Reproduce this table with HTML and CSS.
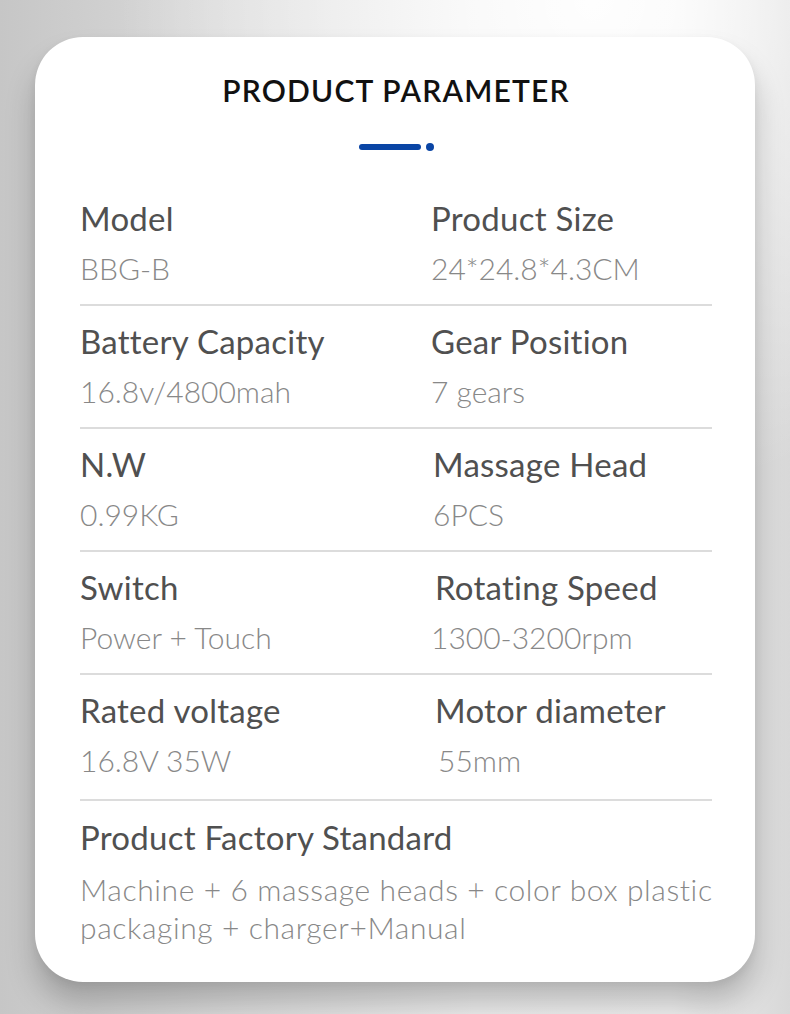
FILE: index.html
```html
<!DOCTYPE html>
<html lang="en">
<head>
<meta charset="utf-8">
<title>Product Parameter</title>
<link rel="stylesheet" href="styles.css">
</head>
<body>
<div class="page">
  <section class="card">
    <h1 class="title">PRODUCT PARAMETER</h1>
    <div class="accent"><span class="accent-bar"></span><span class="accent-dot"></span></div>
    <div class="specs">
      <div class="row">
        <div class="cell"><div class="label">Model</div><div class="value">BBG-B</div></div>
        <div class="cell"><div class="label">Product Size</div><div class="value">24*24.8*4.3CM</div></div>
      </div>
      <div class="row">
        <div class="cell"><div class="label">Battery Capacity</div><div class="value">16.8v/4800mah</div></div>
        <div class="cell"><div class="label">Gear Position</div><div class="value">7 gears</div></div>
      </div>
      <div class="row">
        <div class="cell"><div class="label">N.W</div><div class="value">0.99KG</div></div>
        <div class="cell shift-s"><div class="label">Massage Head</div><div class="value">6PCS</div></div>
      </div>
      <div class="row">
        <div class="cell"><div class="label">Switch</div><div class="value">Power + Touch</div></div>
        <div class="cell shift-m"><div class="label">Rotating Speed</div><div class="value value-back">1300-3200rpm</div></div>
      </div>
      <div class="row row-tall">
        <div class="cell"><div class="label">Rated voltage</div><div class="value">16.8V 35W</div></div>
        <div class="cell shift-m"><div class="label">Motor diameter</div><div class="value value-fwd">55mm</div></div>
      </div>
      <div class="row row-full">
        <div class="cell"><div class="label">Product Factory Standard</div><div class="value value-multi">Machine + 6 massage heads + color box plastic<br>packaging + charger+Manual</div></div>
      </div>
    </div>
  </section>
</div>
</body>
</html>
```
FILE: styles.css
```css
html, body {
  margin: 0;
  padding: 0;
}
body {
  width: 790px;
  height: 1014px;
  overflow: hidden;
  font-family: "Lato", "Liberation Sans", sans-serif;
  background:
    radial-gradient(ellipse 60% 50% at 75% 0%, rgba(255,255,255,0.95), rgba(255,255,255,0) 100%),
    linear-gradient(90deg, #c6c6c6 0%, #dcdcdc 30%, #ededed 60%, #efefef 85%, #d8d8d8 100%);
}
.page {
  padding: 37px 35px 0 35px;
}
.card {
  width: 720px;
  height: 945px;
  box-sizing: border-box;
  background: #ffffff;
  border-radius: 48px;
  box-shadow: 0 22px 30px rgba(0, 0, 0, 0.22), 0 4px 10px rgba(0, 0, 0, 0.06);
  padding: 38px 43px 0 45px;
}
.title {
  margin: 0;
  font-size: 30px;
  line-height: 30px;
  font-weight: 600;
  color: #111111;
  text-align: center;
  letter-spacing: 1.2px;
}
.accent {
  display: flex;
  justify-content: center;
  align-items: center;
  gap: 5px;
  margin-top: 38px;
  height: 8px;
}
.accent-bar {
  width: 62px;
  height: 6px;
  border-radius: 3px;
  background: #0a45a5;
}
.accent-dot {
  width: 8px;
  height: 8px;
  border-radius: 50%;
  background: #0a45a5;
}
.specs {
  margin-top: 32px;
  width: 632px;
}
.row {
  display: grid;
  grid-template-columns: 351px 1fr;
  padding: 15px 0 16px;
  border-bottom: 2px solid #dcdcdc;
}
.row-tall {
  padding-bottom: 19px;
}
.row-full {
  grid-template-columns: 1fr;
  border-bottom: none;
  padding-top: 16px;
}
.label {
  font-size: 33px;
  line-height: 40px;
  font-weight: 400;
  color: #505050;
  letter-spacing: 0.25px;
  white-space: nowrap;
}
.value {
  margin-top: 10px;
  font-size: 30px;
  line-height: 40px;
  font-weight: 300;
  color: #888888;
  letter-spacing: 0;
  white-space: nowrap;
}
.value-multi {
  line-height: 38px;
  margin-top: 13px;
  letter-spacing: 0.6px;
}
.shift-s {
  padding-left: 2px;
}
.shift-m {
  padding-left: 4px;
}
.value-back {
  margin-left: -4px;
}
.value-fwd {
  margin-left: 3px;
}
```
